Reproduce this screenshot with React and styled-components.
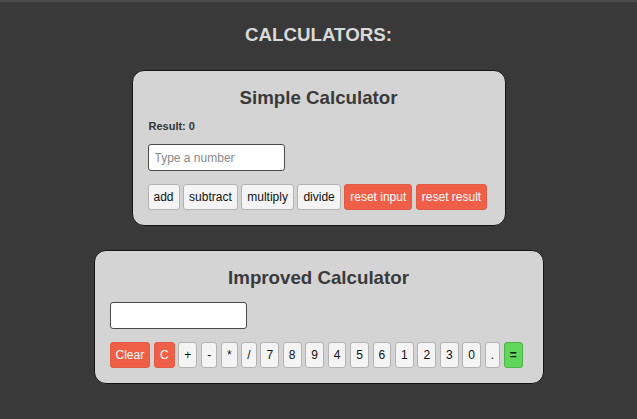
import styled, { createGlobalStyle } from "styled-components";

const GlobalStyle = createGlobalStyle`
  html, body {
    margin: 0;
    padding: 0;
    background: #393939;
  }
  body {
    font-family: "Liberation Sans", Arial, sans-serif;
  }
`;

const Page = styled.div`
  min-height: 419px;
  box-sizing: border-box;
  border-top: 2px solid #4a4a4a;
  display: flex;
  flex-direction: column;
  align-items: center;
  padding-top: 22px;
`;

const Heading = styled.h3`
  margin: 0 0 24px;
  font-size: 18.72px;
  line-height: 22px;
  font-weight: 700;
  color: #d9d9d9;
`;

const Card = styled.div`
  box-sizing: border-box;
  width: ${(props) => props.width}px;
  background: #d4d4d4;
  border: 1px solid #141414;
  border-radius: 12px;
  padding: 16px 15px 15px;
  margin-bottom: 24px;
  display: flex;
  flex-direction: column;
  align-items: flex-start;
`;

const CardTitle = styled.h3`
  align-self: stretch;
  text-align: center;
  margin: 0 0 ${(props) => props.gap}px;
  font-size: 18.72px;
  line-height: 22px;
  font-weight: 700;
  color: #3a3a3a;
`;

const Result = styled.div`
  font-size: 11px;
  line-height: 13px;
  font-weight: 700;
  color: #333;
  margin: 0 0 11px 1px;
`;

const Input = styled.input`
  box-sizing: border-box;
  width: 137px;
  height: 27px;
  margin: 0 0 13px;
  padding: 0 6px;
  border: 1px solid #4a4a4a;
  border-radius: 3px;
  background: #fff;
  font-family: "Liberation Sans", Arial, sans-serif;
  font-size: 12px;
  color: #222;
  outline: none;
  &::placeholder {
    color: #8a8a8a;
  }
`;

const Row = styled.div`
  display: flex;
  gap: ${(props) => props.gap || 3.5}px;
`;

const palette = {
  plain: { bg: "#f4f4f4", border: "#b3b3b3", color: "#111" },
  red: { bg: "#ef5f48", border: "#e05a45", color: "#fff" },
  green: { bg: "#60d65a", border: "#4bb347", color: "#111" },
};

const Button = styled.button`
  box-sizing: border-box;
  height: 26px;
  padding: 0 5px;
  border: 1px solid ${(props) => palette[props.kind || "plain"].border};
  border-radius: 3px;
  background: ${(props) => palette[props.kind || "plain"].bg};
  color: ${(props) => palette[props.kind || "plain"].color};
  font-family: "Liberation Sans", Arial, sans-serif;
  font-size: 12px;
  font-weight: ${(props) => (props.kind === "green" ? 700 : 400)};
  cursor: pointer;
`;

const keys = ["+", "-", "*", "/", "7", "8", "9", "4", "5", "6", "1", "2", "3", "0", "."];

const App = () => {
  return (
    <>
      <GlobalStyle />
      <Page>
        <Heading>CALCULATORS:</Heading>

        <Card width={374}>
          <CardTitle gap={11}>Simple Calculator</CardTitle>
          <Result>Result: 0</Result>
          <Input placeholder="Type a number" />
          <Row>
            <Button>add</Button>
            <Button>subtract</Button>
            <Button>multiply</Button>
            <Button>divide</Button>
            <Button kind="red">reset input</Button>
            <Button kind="red">reset result</Button>
          </Row>
        </Card>

        <Card width={450}>
          <CardTitle gap={13}>Improved Calculator</CardTitle>
          <Input />
          <Row gap={3.75}>
            <Button kind="red">Clear</Button>
            <Button kind="red">C</Button>
            {keys.map((k) => (
              <Button key={k}>{k}</Button>
            ))}
            <Button kind="green">=</Button>
          </Row>
        </Card>
      </Page>
    </>
  );
};

export default App;
